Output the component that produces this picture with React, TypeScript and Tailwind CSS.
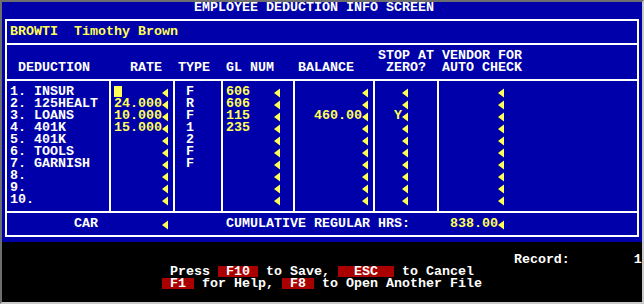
const YEL = 'text-[#ffff55]'

type Row = { n: string; name?: string; rate?: string; cursor?: boolean; type?: string; gl?: string; bal?: string; stop?: string }

const rows: Row[] = [
  { n: '1.', name: 'INSUR', cursor: true, type: 'F', gl: '606' },
  { n: '2.', name: '125HEALT', rate: '24.000', type: 'R', gl: '606' },
  { n: '3.', name: 'LOANS', rate: '10.000', type: 'F', gl: '115', bal: '460.00', stop: 'Y' },
  { n: '4.', name: '401K', rate: '15.000', type: '1', gl: '235' },
  { n: '5.', name: '401K', type: '2' },
  { n: '6.', name: 'TOOLS', type: 'F' },
  { n: '7.', name: 'GARNISH', type: 'F' },
  { n: '8.' },
  { n: '9.' },
  { n: '10.' },
]

// pad text out to character columns, starting from column `start`
function at(parts: [number, string][], start: number) {
  let s = ''
  for (const [c, t] of parts) s = s.padEnd(c - start) + t
  return s
}

function Arrow() {
  return (
    <svg width="8" height="12" viewBox="0 0 8 12" className="inline-block align-top">
      <polygon points="0,7 6,2.5 6,11.5" fill="#ffff55" />
    </svg>
  )
}

function Line({ children, className = '' }: { children?: React.ReactNode; className?: string }) {
  return <div className={`h-[12px] whitespace-pre leading-[12px] ${className}`}>{children}</div>
}

function Key({ label }: { label: string }) {
  return <span className="inline-block h-[11px] bg-[#aa0000] align-top leading-[12px] text-white">{label}</span>
}

function Col({ w, first, children }: { w: string; first?: boolean; children: React.ReactNode }) {
  return <div className={`${w} shrink-0 pl-[3px] pt-[5px] ${first ? '' : 'border-l-2 border-white'}`}>{children}</div>
}

export default function App() {
  return (
    <div className="h-[304px] w-[644px] border-b-2 border-l-2 border-r-2 border-t-2 border-b-[#c8c8c8] border-l-[#6e6e6e] border-r-[#c8c8c8] border-t-[#6e6e6e] bg-black font-['Liberation_Mono',monospace] text-[13.333px] font-bold text-white">
      <div className="h-[240px] bg-[#0000aa]">
        <Line className="pl-[192px]">EMPLOYEE DEDUCTION INFO SCREEN</Line>
        <div className="ml-[3px] mt-[5px] w-[634px] border-2 border-white">
          <div className="h-[22px] pl-[3px] pt-[5px]">
            <Line className={YEL}>BROWTI  Timothy Brown</Line>
          </div>
          <div className="h-[36px] border-t-2 border-white pl-[3px] pt-[5px]">
            <Line>{at([[47, 'STOP AT'], [55, 'VENDOR FOR']], 1)}</Line>
            <Line>
              {at([[2, 'DEDUCTION'], [16, 'RATE'], [22, 'TYPE'], [28, 'GL NUM'], [37, 'BALANCE'], [48, 'ZERO?'], [55, 'AUTO CHECK']], 1)}
            </Line>
          </div>
          <div className="flex h-[132px] border-t-2 border-white">
            <Col w="w-[102px]" first>
              {rows.map((r) => (
                <Line key={r.n}>{r.name ? r.n.padEnd(3) + r.name : r.n}</Line>
              ))}
            </Col>
            <Col w="w-[64px]">
              {rows.map((r) => (
                <Line key={r.n} className={YEL}>
                  {r.cursor ? (
                    <>
                      <span className="inline-block h-[11px] w-[8px] bg-[#ffff55] align-top" />
                      {'     '}
                    </>
                  ) : (
                    (r.rate ?? '').padStart(6)
                  )}
                  <Arrow />
                </Line>
              ))}
            </Col>
            <Col w="w-[48px]">
              {rows.map((r) => (
                <Line key={r.n}>{r.type ? ' ' + r.type : ''}</Line>
              ))}
            </Col>
            <Col w="w-[72px]">
              {rows.map((r) => (
                <Line key={r.n} className={YEL}>
                  {(r.gl ?? '').padEnd(6)}
                  <Arrow />
                </Line>
              ))}
            </Col>
            <Col w="w-[80px]">
              {rows.map((r) => (
                <Line key={r.n} className={YEL}>
                  {'  ' + (r.bal ?? '').padStart(6)}
                  <Arrow />
                </Line>
              ))}
            </Col>
            <Col w="w-[64px]">
              {rows.map((r) => (
                <Line key={r.n} className={YEL}>
                  {'  ' + (r.stop ?? ' ')}
                  <Arrow />
                </Line>
              ))}
            </Col>
            <Col w="w-[200px]">
              {rows.map((r) => (
                <Line key={r.n}>
                  {'       '}
                  <Arrow />
                </Line>
              ))}
            </Col>
          </div>
          <div className="h-[24px] border-t-2 border-white pl-[3px] pt-[5px]">
            <Line>
              {'        CAR        '}
              <Arrow />
              {'       CUMULATIVE REGULAR HRS:     '}
              <span className={YEL}>838.00</span>
              <Arrow />
            </Line>
          </div>
        </div>
      </div>
      <div className="h-[60px]">
        <Line />
        <Line>{at([[64, 'Record:'], [79, '1']], 0)}</Line>
        <Line>
          {' '.repeat(21) + 'Press '}
          <Key label=" F10 " />
          {' to Save, '}
          <Key label="  ESC  " />
          {' to Cancel'}
        </Line>
        <Line>
          {' '.repeat(20)}
          <Key label=" F1 " />
          {' for Help, '}
          <Key label=" F8 " />
          {' to Open Another File'}
        </Line>
        <Line />
      </div>
    </div>
  )
}
